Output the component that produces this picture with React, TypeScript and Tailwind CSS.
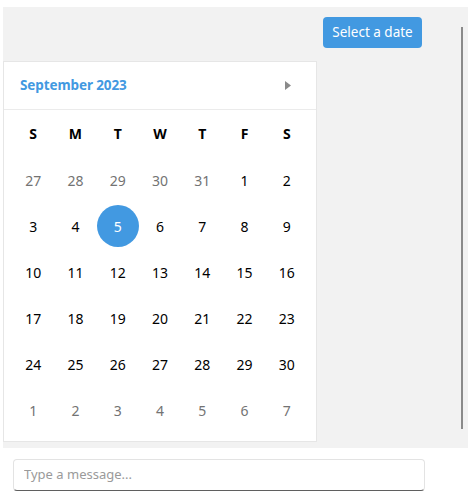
import React from "react";

const weeks: { d: number; muted?: boolean; selected?: boolean }[][] = [
  [{ d: 27, muted: true }, { d: 28, muted: true }, { d: 29, muted: true }, { d: 30, muted: true }, { d: 31, muted: true }, { d: 1 }, { d: 2 }],
  [{ d: 3 }, { d: 4 }, { d: 5, selected: true }, { d: 6 }, { d: 7 }, { d: 8 }, { d: 9 }],
  [{ d: 10 }, { d: 11 }, { d: 12 }, { d: 13 }, { d: 14 }, { d: 15 }, { d: 16 }],
  [{ d: 17 }, { d: 18 }, { d: 19 }, { d: 20 }, { d: 21 }, { d: 22 }, { d: 23 }],
  [{ d: 24 }, { d: 25 }, { d: 26 }, { d: 27 }, { d: 28 }, { d: 29 }, { d: 30 }],
  [{ d: 1, muted: true }, { d: 2, muted: true }, { d: 3, muted: true }, { d: 4, muted: true }, { d: 5, muted: true }, { d: 6, muted: true }, { d: 7, muted: true }],
];

const days = ["S", "M", "T", "W", "T", "F", "S"];

export default function App() {
  return (
    <div
      className="w-[473px] h-[495px] bg-white overflow-hidden"
      style={{ fontFamily: '"Noto Sans", "Open Sans", sans-serif' }}
    >
      <div className="relative ml-[3px] mr-[5px] mt-[7px] h-[441px] bg-[#f2f2f2] flex flex-col">
        <div className="flex justify-end pr-[46px] pt-[10px]">
          <button className="h-[31px] w-[99px] rounded-[4px] bg-[#4299e1] text-white text-[13.5px] leading-none">
            Select a date
          </button>
        </div>
        <div className="mt-[13px] w-[314px] h-[381px] bg-white border border-[#e6e6e6]">
          <div className="h-[48px] border-b border-[#ebebeb] flex items-center justify-between pl-[16px] pr-[25px]">
            <span className="text-[13.5px] font-bold text-[#4299e1] tracking-[-0.1px]">September 2023</span>
            <svg width="6" height="9" viewBox="0 0 6 9">
              <path d="M0 0 L6 4.5 L0 9 Z" fill="#8a8a8a" />
            </svg>
          </div>
          <div className="px-[8px] pt-[2px]">
            <div className="grid grid-cols-7 h-[42px] mb-[5px]">
              {days.map((d, i) => (
                <div key={i} className="flex items-center justify-center text-[14px] font-bold text-black">
                  {d}
                </div>
              ))}
            </div>
            <div className="flex flex-col gap-[4px]">
              {weeks.map((w, wi) => (
                <div key={wi} className="grid grid-cols-7 h-[42px]">
                  {w.map((c, ci) => (
                    <div key={ci} className="flex items-center justify-center">
                      {c.selected ? (
                        <div className="w-[42px] h-[42px] rounded-full bg-[#4299e1] text-white flex items-center justify-center text-[14px]">
                          {c.d}
                        </div>
                      ) : (
                        <span className={`text-[14px] ${c.muted ? "text-[#737373]" : "text-black"}`}>{c.d}</span>
                      )}
                    </div>
                  ))}
                </div>
              ))}
            </div>
          </div>
        </div>
        <div className="absolute left-[458px] top-[20px] w-[2px] h-[402px] bg-[#8a8a8a]" />
      </div>
      <div className="ml-[13px] mt-[11px] w-[412px] h-[32px] rounded-[4px] border border-[#e3e3e3] border-b-[#5f5f5f] bg-white flex items-center px-[10px]">
        <input
          className="w-full outline-none text-[13px] placeholder:text-[#9a9a9a] bg-transparent"
          placeholder="Type a message..."
          style={{ fontFamily: '"Noto Sans", "Open Sans", sans-serif' }}
        />
      </div>
    </div>
  );
}
